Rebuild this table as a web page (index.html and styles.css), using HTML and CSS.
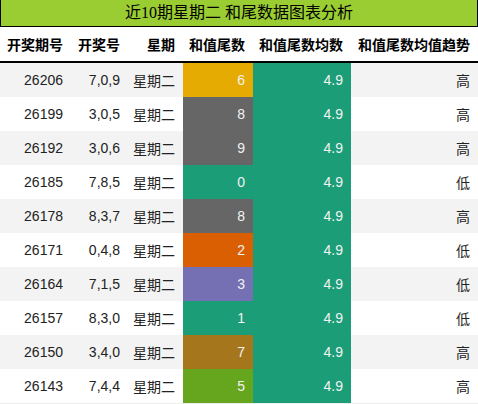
FILE: index.html
```html
<!DOCTYPE html>
<html lang="zh">
<head>
<meta charset="utf-8">
<title>近10期星期二 和尾数据图表分析</title>
<link rel="stylesheet" href="styles.css">
</head>
<body>
<div class="title">近10期星期二 和尾数据图表分析</div>
<table class="grid">
  <colgroup>
    <col class="c1"><col class="c2"><col class="c3"><col class="c4"><col class="c5"><col class="c6">
  </colgroup>
  <thead>
    <tr><th>开奖期号</th><th>开奖号</th><th>星期</th><th>和值尾数</th><th>和值尾数均数</th><th>和值尾数均值趋势</th></tr>
  </thead>
  <tbody>
    <tr><td>26206</td><td>7,0,9</td><td>星期二</td><td class="v k6">6</td><td class="v avg">4.9</td><td>高</td></tr>
    <tr><td>26199</td><td>3,0,5</td><td>星期二</td><td class="v k8">8</td><td class="v avg">4.9</td><td>高</td></tr>
    <tr><td>26192</td><td>3,0,6</td><td>星期二</td><td class="v k8">9</td><td class="v avg">4.9</td><td>高</td></tr>
    <tr><td>26185</td><td>7,8,5</td><td>星期二</td><td class="v k0">0</td><td class="v avg">4.9</td><td>低</td></tr>
    <tr><td>26178</td><td>8,3,7</td><td>星期二</td><td class="v k8">8</td><td class="v avg">4.9</td><td>高</td></tr>
    <tr><td>26171</td><td>0,4,8</td><td>星期二</td><td class="v k2">2</td><td class="v avg">4.9</td><td>低</td></tr>
    <tr><td>26164</td><td>7,1,5</td><td>星期二</td><td class="v k3">3</td><td class="v avg">4.9</td><td>低</td></tr>
    <tr><td>26157</td><td>8,3,0</td><td>星期二</td><td class="v k0">1</td><td class="v avg">4.9</td><td>低</td></tr>
    <tr><td>26150</td><td>3,4,0</td><td>星期二</td><td class="v k7">7</td><td class="v avg">4.9</td><td>高</td></tr>
    <tr><td>26143</td><td>7,4,4</td><td>星期二</td><td class="v k5">5</td><td class="v avg">4.9</td><td>高</td></tr>
  </tbody>
</table>
</body>
</html>
```
FILE: styles.css
```css
html, body {
  margin: 0;
  padding: 0;
  background: #fff;
}
body {
  width: 478px;
}
.title {
  height: 26px;
  line-height: 26px;
  background: #9acd32;
  border: 1px solid #000;
  border-top: 0;
  text-align: center;
  font-family: "Liberation Serif", "Noto Sans CJK SC", serif;
  font-size: 16px;
  color: #000;
}
.grid {
  width: 478px;
  border-collapse: collapse;
  table-layout: fixed;
  font-family: "Liberation Sans", "Noto Sans CJK SC", sans-serif;
  font-size: 14px;
}
.c1 { width: 71px; }
.c2 { width: 57px; }
.c3 { width: 55px; }
.c4 { width: 70px; }
.c5 { width: 98px; }
.c6 { width: 127px; }
.grid th {
  height: 34px;
  padding: 0 8px 0 0;
  text-align: right;
  font-weight: bold;
  color: #000;
  white-space: nowrap;
  border-bottom: 2px solid #000;
}
.grid td {
  height: 34px;
  padding: 0 8px 0 0;
  text-align: right;
  vertical-align: middle;
  color: #222;
  white-space: nowrap;
}
.grid tbody tr:nth-child(odd) {
  background: #f3f3f3;
}
.grid tbody tr:last-child td {
  border-bottom: 1px solid #eee;
}
.grid td.v {
  color: #f2f2f2;
}
.avg { background: #1b9e77; }
.k0 { background: #1b9e77; }
.k2 { background: #d95f02; }
.k3 { background: #7570b3; }
.k5 { background: #66a61e; }
.k6 { background: #e6ab02; }
.k7 { background: #a6761d; }
.k8 { background: #666666; }
```
